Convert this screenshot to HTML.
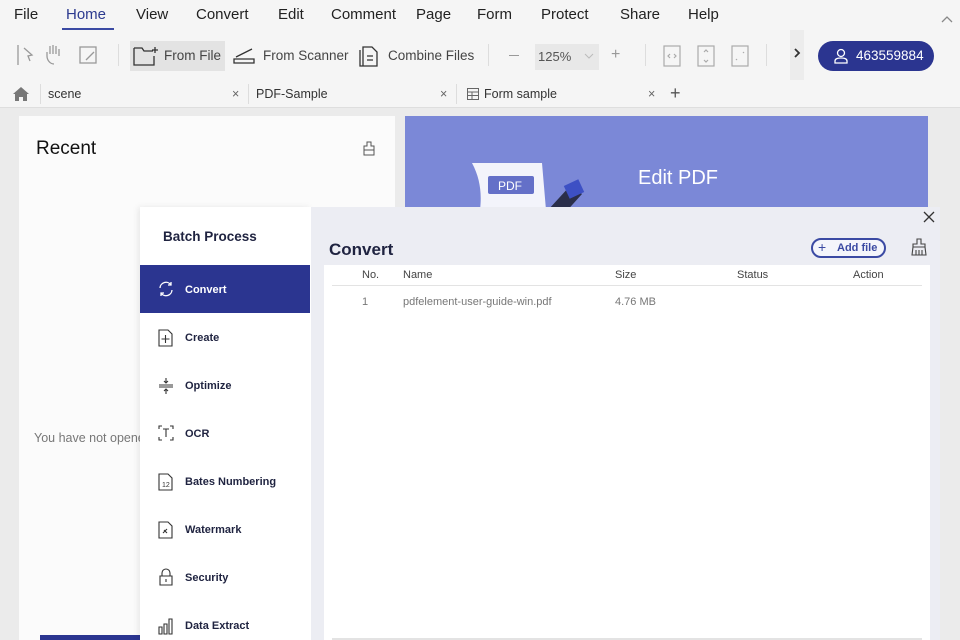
<!DOCTYPE html>
<html><head><meta charset="utf-8"><style>
*{margin:0;padding:0;box-sizing:border-box}
body{width:960px;height:640px;overflow:hidden;background:#ebebeb;font-family:"Liberation Sans",sans-serif;position:relative;color:#222}
.abs{position:absolute}
#top{left:0;top:0;width:960px;height:108px;background:#f5f5f5;border-bottom:1px solid #dedede}
.menu{top:6px;font-size:15px;color:#222}
.tb{top:48px;font-size:13.5px;color:#444}
.tab{top:87px;font-size:12.5px;color:#333}
.side{font-size:11px;font-weight:bold;color:#1f2340}
.th{top:269px;font-size:11px;color:#444}
</style></head><body>
<div id="top" class="abs"></div>
<div class="abs menu" style="left:14px">File</div>
<div class="abs menu" style="left:66px;color:#2c3a8f">Home</div>
<div class="abs" style="left:62px;top:28px;width:52px;height:2px;background:#3b4aa3"></div>
<div class="abs menu" style="left:136px">View</div>
<div class="abs menu" style="left:196px">Convert</div>
<div class="abs menu" style="left:278px">Edit</div>
<div class="abs menu" style="left:331px">Comment</div>
<div class="abs menu" style="left:416px">Page</div>
<div class="abs menu" style="left:477px">Form</div>
<div class="abs menu" style="left:541px">Protect</div>
<div class="abs menu" style="left:620px">Share</div>
<div class="abs menu" style="left:688px">Help</div>
<svg class="abs" style="left:940px;top:14px" width="14" height="10"><path d="M2 8l5-5 5 5" stroke="#888" fill="none" stroke-width="1.3"/></svg>
<svg class="abs" style="left:14px;top:42px" width="90" height="26" fill="none" stroke="#999" stroke-width="1.3">
<path d="M4 3v20M10 6l8 7-4 1 2 5"/><path d="M40 22c-4 0-7-4-7-8v-4M36 12V4M39 12V3M42 12V4M45 14V7"/><rect x="66" y="5" width="16" height="16"/><path d="M72 18l8-8"/></svg>
<div class="abs" style="left:118px;top:44px;width:1px;height:22px;background:#ddd"></div>
<div class="abs" style="left:130px;top:41px;width:95px;height:30px;background:#e3e3e3"></div>
<svg class="abs" style="left:133px;top:45px" width="26" height="22" fill="none" stroke="#333" stroke-width="1.3"><path d="M1 3h8l2 3h9M1 3v17h20v-9"/><path d="M22 2v6M19 5h6"/></svg>
<div class="abs tb" style="left:164px">From File</div>
<svg class="abs" style="left:232px;top:45px" width="26" height="22" fill="none" stroke="#333" stroke-width="1.3"><path d="M2 18h20v-4H2zM4 12L20 4"/></svg>
<div class="abs tb" style="left:263px">From Scanner</div>
<svg class="abs" style="left:358px;top:44px" width="22" height="24" fill="none" stroke="#333" stroke-width="1.3"><path d="M5 3h9l5 5v14H5zM2 6v16h3M9 12h6M9 16h6"/></svg>
<div class="abs tb" style="left:388px">Combine Files</div>
<div class="abs" style="left:488px;top:44px;width:1px;height:22px;background:#ddd"></div>
<div class="abs" style="left:509px;top:55px;width:10px;height:1px;background:#999"></div>
<div class="abs" style="left:535px;top:44px;width:64px;height:26px;background:#e8e8e8"></div>
<div class="abs tb" style="left:538px;top:49px;font-size:13px;color:#555">125%</div>
<svg class="abs" style="left:584px;top:53px" width="10" height="6"><path d="M1 1l4 4 4-4" stroke="#bbb" fill="none"/></svg>
<div class="abs tb" style="left:611px;top:46px;color:#999;font-size:16px">+</div>
<div class="abs" style="left:645px;top:44px;width:1px;height:22px;background:#ddd"></div>
<svg class="abs" style="left:662px;top:44px" width="94" height="24" fill="none" stroke="#aaa" stroke-width="1.2"><rect x="2" y="2" width="16" height="20"/><rect x="36" y="2" width="16" height="20"/><rect x="70" y="2" width="16" height="20"/><path d="M8 10l-2 2 2 2M12 10l2 2-2 2M42 8l2-2 2 2M42 16l2 2 2-2M75 15l-1 1M81 9l1-1"/></svg>
<div class="abs" style="left:766px;top:44px;width:1px;height:22px;background:#ddd"></div>
<div class="abs" style="left:790px;top:30px;width:14px;height:50px;background:#ececec"></div>
<svg class="abs" style="left:793px;top:48px" width="8" height="10"><path d="M2 1l4 4-4 4" stroke="#333" fill="none" stroke-width="1.8"/></svg>
<div class="abs" style="left:818px;top:41px;width:116px;height:30px;border-radius:15px;background:#2b3590"></div>
<svg class="abs" style="left:834px;top:48px" width="14" height="16" fill="none" stroke="#fff" stroke-width="1.3"><circle cx="7" cy="5" r="3.5"/><path d="M1 15v-2c0-2 2-3 6-3s6 1 6 3v2z"/></svg>
<div class="abs" style="left:856px;top:48px;color:#fff;font-size:13.5px">463559884</div>
<svg class="abs" style="left:12px;top:86px" width="18" height="16"><path d="M9 1L1 8h2v7h4v-4h4v4h4V8h2z" fill="#777"/></svg>
<div class="abs" style="left:40px;top:84px;width:1px;height:20px;background:#ddd"></div>
<div class="abs tab" style="left:48px">scene</div><div class="abs tab" style="left:232px;color:#666">×</div>
<div class="abs" style="left:248px;top:84px;width:1px;height:20px;background:#ddd"></div>
<div class="abs tab" style="left:256px">PDF-Sample</div><div class="abs tab" style="left:440px;color:#666">×</div>
<div class="abs" style="left:456px;top:84px;width:1px;height:20px;background:#ddd"></div>
<svg class="abs" style="left:466px;top:87px" width="14" height="14" fill="none" stroke="#666"><rect x="1.5" y="1.5" width="11" height="11"/><path d="M1.5 5h11M1.5 8.5h11M6 5v7.5"/></svg>
<div class="abs tab" style="left:484px">Form sample</div><div class="abs tab" style="left:648px;color:#666">×</div>
<div class="abs tab" style="left:670px;top:83px;font-size:18px;color:#555">+</div>
<div class="abs" style="left:19px;top:116px;width:376px;height:524px;background:#fbfbfb"></div>
<div class="abs" style="left:36px;top:138px;font-size:19px;color:#111">Recent</div>
<svg class="abs" style="left:362px;top:141px" width="14" height="16" fill="none" stroke="#555"><path d="M5 1h4v4h3v9H2V5h3zM2 9h10"/></svg>
<div class="abs" style="left:34px;top:431px;font-size:12.5px;color:#777">You have not opene</div>
<div class="abs" style="left:40px;top:635px;width:100px;height:5px;background:#2b3590"></div>
<div class="abs" style="left:405px;top:116px;width:523px;height:100px;background:#7b88d7"></div>
<svg class="abs" style="left:468px;top:160px" width="130" height="50"><path d="M4 3h70l4 47H12c2-17 0-32-8-47z" fill="#f3f4fb"/><rect x="20" y="16" width="46" height="18" rx="2" fill="#6470c8"/><text x="30" y="30" font-size="12" fill="#fff" font-family="Liberation Sans">PDF</text><path d="M80 50l22-24 12 8-18 20z" fill="#2a2e4a"/><rect x="98" y="22" width="16" height="14" fill="#3d50c4" transform="rotate(-25 106 29)"/></svg>
<div class="abs" style="left:638px;top:167px;font-size:20px;color:#fff">Edit PDF</div>
<div class="abs" style="left:140px;top:207px;width:171px;height:433px;background:#fff;box-shadow:-2px 0 6px rgba(0,0,0,.08)"></div>
<div class="abs" style="left:311px;top:207px;width:629px;height:433px;background:#ecedf3"></div>
<div class="abs" style="left:163px;top:229px;font-size:13.5px;font-weight:bold;color:#1f2340">Batch Process</div>
<div class="abs" style="left:140px;top:265px;width:170px;height:48px;background:#2b3590"></div>
<svg class="abs" style="left:157px;top:280px" width="18" height="18" fill="none" stroke="#fff" stroke-width="1.3"><path d="M3 8a6 6 0 0 1 11-3M15 10a6 6 0 0 1-11 3M14 2v3h-3M4 16v-3h3"/></svg>
<div class="abs side" style="left:185px;top:284px;color:#fff">Convert</div>
<svg class="abs" style="left:157px;top:328px" width="18" height="20" fill="none" stroke="#333" stroke-width="1.1">
<path d="M2 2h9l4 4v12H2zM8.5 7v8M4.5 11h8"/></svg>
<div class="abs side" style="left:185px;top:332px">Create</div>
<svg class="abs" style="left:157px;top:376px" width="18" height="20" fill="none" stroke="#333" stroke-width="1.1"><path d="M2 9h14M2 11h14M9 2v5M7 5l2 2 2-2M9 18v-5M7 15l2-2 2 2"/></svg>
<div class="abs side" style="left:185px;top:380px">Optimize</div>
<svg class="abs" style="left:157px;top:424px" width="18" height="20" fill="none" stroke="#333" stroke-width="1.1"><path d="M2 5V2h3M13 2h3v3M2 13v3h3M13 16h3v-3M6 5h6M9 5v8"/></svg>
<div class="abs side" style="left:185px;top:428px">OCR</div>
<svg class="abs" style="left:157px;top:472px" width="18" height="20" fill="none" stroke="#333" stroke-width="1.1"><path d="M2 2h9l4 4v12H2z"/><text x="5" y="15" font-size="7" fill="#333" stroke="none">12</text></svg>
<div class="abs side" style="left:185px;top:476px">Bates Numbering</div>
<svg class="abs" style="left:157px;top:520px" width="18" height="20" fill="none" stroke="#333" stroke-width="1.1"><path d="M2 2h9l4 4v12H2zM6 13l4-4M7 10l3 3"/></svg>
<div class="abs side" style="left:185px;top:524px">Watermark</div>
<svg class="abs" style="left:157px;top:567px" width="18" height="20" fill="none" stroke="#333" stroke-width="1.1"><path d="M5 9V6a4 4 0 0 1 8 0v3M3 9h12v9H3zM9 12v3"/></svg>
<div class="abs side" style="left:185px;top:572px">Security</div>
<svg class="abs" style="left:157px;top:616px" width="18" height="20" fill="none" stroke="#333" stroke-width="1.1"><path d="M2 11h3v7H2zM7 8h3v10H7zM12 3h3v15h-3z"/></svg>
<div class="abs side" style="left:185px;top:620px">Data Extract</div>
<svg class="abs" style="left:923px;top:211px" width="12" height="12"><path d="M1 1l10 10M11 1L1 11" stroke="#333" stroke-width="1.3"/></svg>
<div class="abs" style="left:329px;top:240px;font-size:17px;font-weight:bold;color:#1f2340">Convert</div>
<div class="abs" style="left:811px;top:238px;width:75px;height:20px;border:2px solid #3b4aa3;border-radius:10px;background:#f4f5fb"></div>
<div class="abs" style="left:818px;top:239px;font-size:14px;color:#3b4aa3">+</div>
<div class="abs" style="left:837px;top:242px;font-size:11px;font-weight:bold;color:#3b4aa3">Add file</div>
<svg class="abs" style="left:911px;top:238px" width="16" height="18" fill="none" stroke="#444" stroke-width="1.1"><path d="M6 1h4v5h4v3H2V6h4zM2 9l-1 8h14l-1-8M5 12v5M8 12v5M11 12v5"/></svg>
<div class="abs" style="left:324px;top:265px;width:606px;height:375px;background:#fff"></div>
<div class="abs th" style="left:362px">No.</div>
<div class="abs th" style="left:403px">Name</div>
<div class="abs th" style="left:615px">Size</div>
<div class="abs th" style="left:737px">Status</div>
<div class="abs th" style="left:853px">Action</div>
<div class="abs" style="left:332px;top:285px;width:590px;height:1px;background:#e3e3e3"></div>
<div class="abs" style="left:362px;top:296px;font-size:11px;color:#777">1</div>
<div class="abs" style="left:403px;top:296px;font-size:11px;color:#777">pdfelement-user-guide-win.pdf</div>
<div class="abs" style="left:615px;top:296px;font-size:11px;color:#777">4.76 MB</div>
<div class="abs" style="left:332px;top:638px;width:590px;height:2px;background:#e3e3e3"></div>
</body></html>
